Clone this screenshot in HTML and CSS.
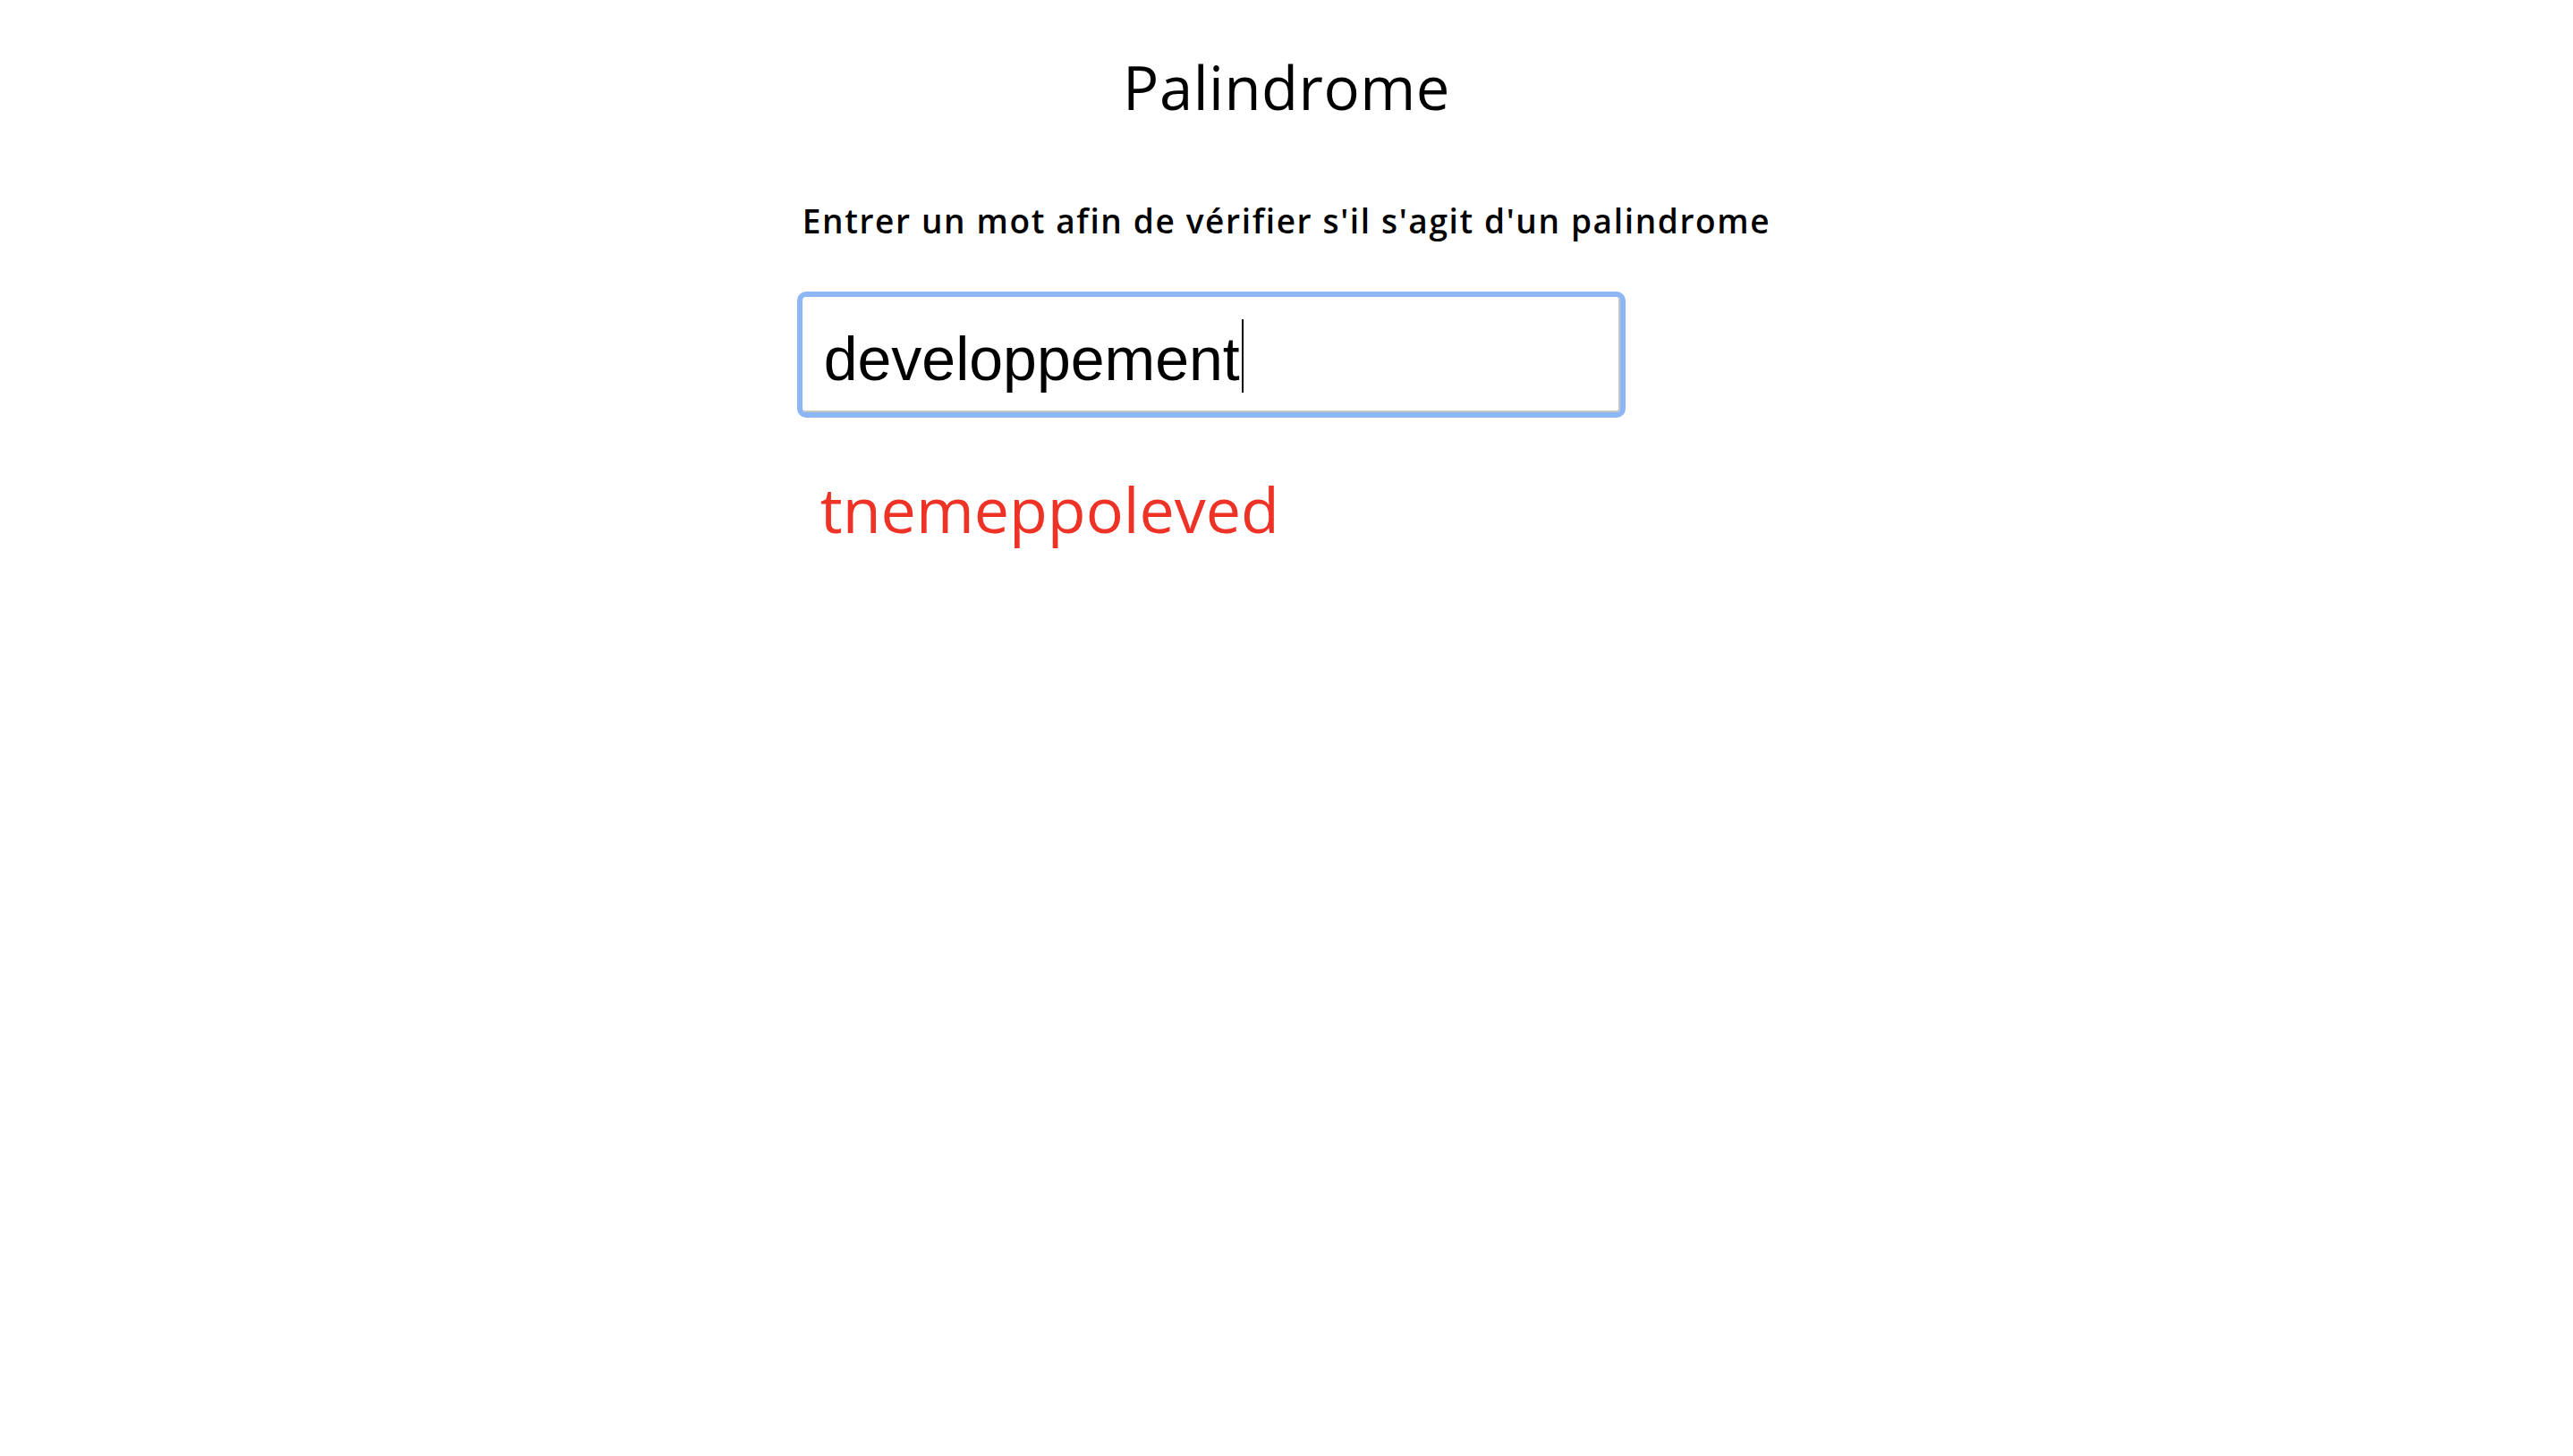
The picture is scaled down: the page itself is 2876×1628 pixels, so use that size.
FILE: index.html
```html
<!DOCTYPE html>
<html lang="fr">
<head>
<meta charset="utf-8">
<title>Palindrome</title>
<link rel="stylesheet" href="styles.css">
</head>
<body>
<main class="app">
  <h1 class="title">Palindrome</h1>
  <section class="panel">
    <p class="subtitle">Entrer un mot afin de vérifier s'il s'agit d'un palindrome</p>
    <div class="field"><span class="value">developpement</span><span class="caret"></span></div>
    <p class="result">tnemeppoleved</p>
  </section>
</main>
</body>
</html>
```

FILE: styles.css
```css
html, body {
  margin: 0;
  padding: 0;
  background: #ffffff;
}

.app {
  display: flex;
  flex-direction: column;
  align-items: center;
  font-family: "Open Sans", "Noto Sans", sans-serif;
  color: #000000;
}

.title {
  margin: 51px 0 0;
  font-size: 67px;
  font-weight: 400;
  line-height: normal;
  letter-spacing: 0.5px;
}

.panel {
  display: flex;
  flex-direction: column;
  align-items: flex-start;
  margin-top: 78px;
}

.subtitle {
  margin: 0;
  font-size: 37px;
  font-weight: 600;
  line-height: normal;
  letter-spacing: 1.65px;
}

.field {
  box-sizing: border-box;
  width: 914px;
  height: 129px;
  margin-top: 60px;
  padding: 30px 20px 0 24px;
  border-right: 2px solid #c6c6c6;
  border-bottom: 2px solid #c6c6c6;
  border-radius: 4px;
  outline: 6px solid #8db6f5;
  outline-offset: 0;
  font-family: "Liberation Sans", Arial, sans-serif;
  font-size: 68px;
  line-height: normal;
  white-space: nowrap;
}

.caret {
  display: inline-block;
  width: 2px;
  height: 82px;
  margin-left: 2px;
  margin-top: -7px;
  vertical-align: -14px;
  background: #000000;
}

.result {
  margin: 60px 0 0;
  padding-left: 20px;
  font-size: 70px;
  font-weight: 400;
  line-height: normal;
  color: #ee3226;
}
```
